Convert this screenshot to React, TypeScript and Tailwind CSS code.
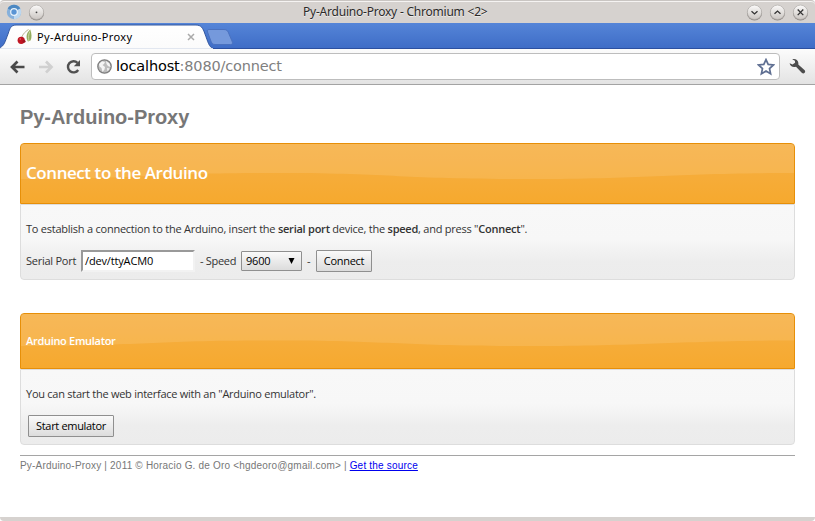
import type { ReactNode } from "react";

function Wave({ trough, crest, height }: { trough: number; crest: number; height: number }) {
  const d = `M0 0H773V${crest}C655 ${crest} 625 ${trough} 500 ${trough}S375 ${crest} 250 ${crest}S125 ${trough} 0 ${trough}Z`;
  return (
    <svg className="absolute inset-0" width="773" height={height} viewBox={`0 0 773 ${height}`}>
      <path d={d} fill="#fff" fillOpacity="0.11" />
    </svg>
  );
}

function WindowButton({ children }: { children?: ReactNode }) {
  return (
    <svg width="17" height="17" viewBox="0 0 17 17" fill="none">
      <circle cx="8.5" cy="9" r="7.5" fill="#8f8a86" />
      <circle cx="8.5" cy="8.3" r="7.2" fill="url(#knob)" stroke="#aaa6a2" strokeWidth="0.6" />
      {children}
    </svg>
  );
}

function TitleBar() {
  return (
    <div className="flex h-[23px] items-center rounded-t-[4px] border-t border-[#c9c5c2] bg-[#d6d2cf] pr-[6px] pl-[6px] shadow-[inset_0_1px_0_#f5f3f2]">
      <svg width="16" height="16" viewBox="0 0 16 16">
        <circle cx="8" cy="8" r="7.2" fill="#86b0db" />
        <path d="M8 8L1.7 4.5A7.2 7.2 0 0 1 14.3 4.5Z" fill="#4c88c2" />
        <path d="M8 8L14.3 4.5A7.2 7.2 0 0 1 8 15.2Z" fill="#bcd7ef" />
        <circle cx="8" cy="8" r="3.9" fill="#e9f2fa" />
        <circle cx="8" cy="8" r="2.7" fill="#5a94d4" />
      </svg>
      <div className="ml-[6px]">
        <WindowButton>
          <circle cx="8.5" cy="8.3" r="0.9" fill="#444" />
        </WindowButton>
      </div>
      <div className="ml-[258px] w-[200px] font-['Noto_Sans',sans-serif] text-[12px] leading-[22px] tracking-[-0.22px] whitespace-nowrap text-[#2c2a29] [text-shadow:0_1px_0_#eeecea]">
        Py-Arduino-Proxy - Chromium &lt;2&gt;
      </div>
      <div className="ml-auto flex gap-[6px]">
        <WindowButton>
          <path d="M5.500 7.200l3 2.700 3-2.700" stroke="#333" strokeWidth="1.300" />
        </WindowButton>
        <WindowButton>
          <path d="M5.500 9.700l3-2.700 3 2.700" stroke="#333" strokeWidth="1.300" />
        </WindowButton>
        <WindowButton>
          <path d="M5.700 5.500l5.600 5.600M11.300 5.500l-5.600 5.600" stroke="#333" strokeWidth="1.300" />
        </WindowButton>
      </div>
    </div>
  );
}

function TabStrip() {
  return (
    <div className="flex h-[26px] bg-gradient-to-b from-[#5585d8] to-[#3e6cc6] shadow-[inset_0_-1px_0_#2c50a0]">
      <div className="relative flex h-[26px] w-[206px] items-center pt-[2px]">
        <svg className="absolute top-0 left-0" width="216" height="26" viewBox="0 0 216 26">
          <path
            d="M0 26V24.500C4 23 5 19 8 11C10 5 11 2 16 2H196C201 2 203 5 205 11C208 19 209 24 213 25.500V26Z"
            fill="url(#tabfill)"
            stroke="#34589f"
            strokeWidth="1"
          />
          <path d="M0 25.200H213V26H0Z" fill="#fbfbfb" />
        </svg>
        <svg className="relative ml-[17px]" width="16" height="16" viewBox="0 0 16 16">
          <path d="M11.500 .5C7 3.500 5.500 6 4.500 9" stroke="#a39d70" strokeWidth="0.800" fill="none" />
          <path d="M13.200 .5C8.800 4 8.800 9.500 11 12.500L13.500 11.500C15.200 8.500 14.600 4 13.200 .5Z" fill="#94ad5e" />
          <path d="M12.800 2.500C11.400 5.500 11.300 9 12 12" stroke="#c8d9a4" strokeWidth="1" fill="none" />
          <circle cx="4.200" cy="11.300" r="3.600" fill="#c01522" />
          <circle cx="7" cy="12.300" r="1.500" fill="#a01420" />
          <circle cx="3.200" cy="10" r="0.800" fill="#e8747a" />
        </svg>
        <span className="relative ml-1 font-['Noto_Sans',sans-serif] text-[11px] tracking-[0.380px] whitespace-nowrap text-black">
          Py-Arduino-Proxy
        </span>
        <svg className="absolute top-[10px] left-[187px]" width="8" height="8" viewBox="0 0 8 8">
          <path d="M1 1l6 6M7 1L1 7" stroke="#aaa" strokeWidth="1.500" />
        </svg>
      </div>
      <svg className="mt-[6px]" width="28" height="16" viewBox="0 0 28 16">
        <path
          d="M3 .5H18C21 .5 22 2 23 5L26 12C27 14.500 26.500 15.500 24.500 15.500H9C6.500 15.500 5.500 14 4.500 11L1.500 3C1 1.200 1.500 .5 3 .5Z"
          fill="#7599dc"
          stroke="#4a71bf"
        />
      </svg>
    </div>
  );
}

function Toolbar() {
  return (
    <div className="flex h-[36px] items-center border-b border-[#a3a3a3] bg-gradient-to-b from-[#fcfcfc] to-[#e3e3e3] pl-[10px]">
      <svg width="16" height="16" viewBox="0 0 16 16" fill="none">
        <path d="M14.500 8H2.500M7.500 2.500L2 8l5.500 5.500" stroke="#4a4a4a" strokeWidth="2.700" />
      </svg>
      <svg className="ml-[12px]" width="16" height="16" viewBox="0 0 16 16" fill="none">
        <path d="M1 8H13M8 2.500L13.500 8L8 13.500" stroke="#d0d0d0" strokeWidth="2.700" />
      </svg>
      <svg className="ml-[11px]" width="17" height="16" viewBox="0 0 17 16" fill="none">
        <path d="M12.500 3.800A5.600 5.600 0 1 0 13.200 11" stroke="#505050" strokeWidth="2.400" />
        <path d="M15 1V7.200H8.800Z" fill="#505050" />
      </svg>
      <div className="ml-[9px] flex h-[27px] w-[689px] items-center rounded-[4px] border border-[#bdbdbd] bg-white pr-[4px] pl-[5px]">
        <svg width="15" height="15" viewBox="0 0 15 15">
          <circle cx="7.500" cy="7.500" r="6.700" fill="#bdbdbd" stroke="#7f7f7f" strokeWidth="1.300" />
          <path d="M2 5L5 2.200L8 3L7 5L5.500 6L8 8L7.500 10.500L5.500 13L4.500 9L2.500 7.500ZM9 2L12.500 4.500L13.500 8L11 7L9.500 5ZM10 9L12.500 9.500L10.500 12.500Z" fill="#f4f4f4" />
        </svg>
        <span className="ml-[4px] -mt-[2px] font-['DejaVu_Sans',sans-serif] text-[14.500px] leading-[20px] tracking-[-0.170px] whitespace-nowrap text-[#808080]">
          <span className="text-black">localhost</span>:8080/connect
        </span>
        <svg className="ml-auto" width="18" height="18" viewBox="0 0 18 18">
          <path
            d="M9 1.600L11.200 6.400L16.400 7L12.500 10.500L13.600 15.800L9 13.100L4.400 15.800L5.500 10.500L1.600 7L6.800 6.400Z"
            fill="#fff"
            stroke="#5f6f92"
            strokeWidth="1.700"
          />
        </svg>
      </div>
      <svg className="ml-[9px]" width="17" height="17" viewBox="0 0 17 17">
        <path
          d="M3.200 1.200C6 .3 9 1.500 9.400 5L9.300 6.500L15.700 12.300C17.200 14.300 14.800 16.400 13 15L7 8.800C4 9.800 1 8.400 .6 5.300L3.500 6.600L6.100 4.800L5.900 2.800Z"
          fill="#4d4d4d"
        />
      </svg>
    </div>
  );
}

const buttonStyle =
  "h-[22px] rounded-[1px] border border-[#8f8f8f] bg-gradient-to-b from-[#fafafa] to-[#dcdcdc] text-[11px] leading-[20px] font-medium whitespace-nowrap text-black";

export default function App() {
  return (
    <div className="flex h-[521px] w-[815px] flex-col bg-white">
      <svg className="absolute" width="0" height="0">
        <defs>
          <linearGradient id="knob" x1="0" y1="0" x2="0" y2="1">
            <stop stopColor="#fbfaf9" />
            <stop offset="1" stopColor="#cbc6c2" />
          </linearGradient>
          <linearGradient id="tabfill" x1="0" y1="0" x2="0" y2="1">
            <stop stopColor="#fff" />
            <stop offset="1" stopColor="#fbfbfb" />
          </linearGradient>
        </defs>
      </svg>
      <TitleBar />
      <TabStrip />
      <Toolbar />
      <main className="flex flex-1 flex-col px-5 font-['Open_Sans',sans-serif] text-[11px] text-[#333]">
        <h1 className="mt-[19px] h-[39px] font-['Liberation_Sans',sans-serif] text-[20px] leading-[26px] font-bold tracking-[-0.050px] whitespace-nowrap text-[#777]">
          Py-Arduino-Proxy
        </h1>
        <section>
          <div className="relative flex h-[61px] items-center rounded-t-[4px] border border-[#e78f08] bg-gradient-to-b from-[#f6b044] to-[#f6a92e] pl-[5px]">
            <Wave trough={35} crest={29} height={59} />
            <h2 className="relative -mt-[2px] text-[17px] font-semibold tracking-[-0.440px] whitespace-nowrap text-white">
              Connect to the Arduino
            </h2>
          </div>
          <div className="h-[76px] rounded-b-[4px] border border-[#dddddd] bg-[linear-gradient(#f8f8f8_0%,#f7f7f7_46%,#ededed_76%,#ececec_100%)] pt-[15px] pl-[5px]">
            <p className="h-[30px] leading-[18px] tracking-[-0.240px] whitespace-nowrap">
              To establish a connection to the Arduino, insert the <b className="font-semibold">serial port</b> device, the{" "}
              <b className="font-semibold">speed</b>, and press "<b className="font-semibold">Connect</b>".
            </p>
            <div className="flex h-[22px] items-center whitespace-nowrap">
              <span className="w-[55px] tracking-[-0.250px]">Serial Port</span>
              <div className="h-[22px] w-[114px] border-2 border-t-[#999] border-r-[#f2f2f2] border-b-[#f2f2f2] border-l-[#999] bg-white pl-[2px] leading-[18px] font-medium tracking-[-0.150px] text-black">
                /dev/ttyACM0
              </div>
              <span className="ml-[5px] w-[41px] tracking-[-0.300px]">- Speed</span>
              <div className="flex h-[20px] w-[61px] items-center justify-between rounded-[1px] border border-[#8f8f8f] bg-gradient-to-b from-[#fafafa] to-[#dcdcdc] pr-[6px] pl-[4px] font-medium tracking-[-0.200px] text-black">
                <span>9600</span>
                <svg width="7" height="6" viewBox="0 0 8 7">
                  <path d="M.500 0H7.500L4 7Z" fill="#000" />
                </svg>
              </div>
              <span className="ml-[5px] w-[9px]">-</span>
              <button className={`${buttonStyle} w-[56px] tracking-[-0.300px]`}>Connect</button>
            </div>
          </div>
        </section>
        <section className="mt-[33px]">
          <div className="relative flex h-[56px] items-center rounded-t-[4px] border border-[#e78f08] bg-gradient-to-b from-[#f6b044] to-[#f6a92e] pl-[5px]">
            <Wave trough={32} crest={26.500} height={54} />
            <h3 className="relative text-[11px] font-semibold tracking-[-0.300px] whitespace-nowrap text-white">
              Arduino Emulator
            </h3>
          </div>
          <div className="h-[76px] rounded-b-[4px] border border-[#dddddd] bg-[linear-gradient(#f8f8f8_0%,#f7f7f7_46%,#ededed_76%,#ececec_100%)] pt-[15px] pl-[5px]">
            <p className="h-[30px] leading-[18px] tracking-[-0.260px] whitespace-nowrap">
              You can start the web interface with an "Arduino emulator".
            </p>
            <button className={`${buttonStyle} ml-[2px] w-[86px] tracking-[-0.320px]`}>Start emulator</button>
          </div>
        </section>
        <footer className="mt-[10px] border-t border-[#a5a5a5] pt-[3px] font-['Liberation_Sans',sans-serif] text-[10px] leading-[14px] tracking-[0.190px] whitespace-nowrap text-[#777]">
          Py-Arduino-Proxy | 2011 © Horacio G. de Oro &lt;hgdeoro@gmail.com&gt; |{" "}
          <a className="text-[#0000ee] underline">Get the source</a>
        </footer>
      </main>
      <div className="h-[4px] rounded-b-[4px] bg-[#d6d2cf]" />
    </div>
  );
}
